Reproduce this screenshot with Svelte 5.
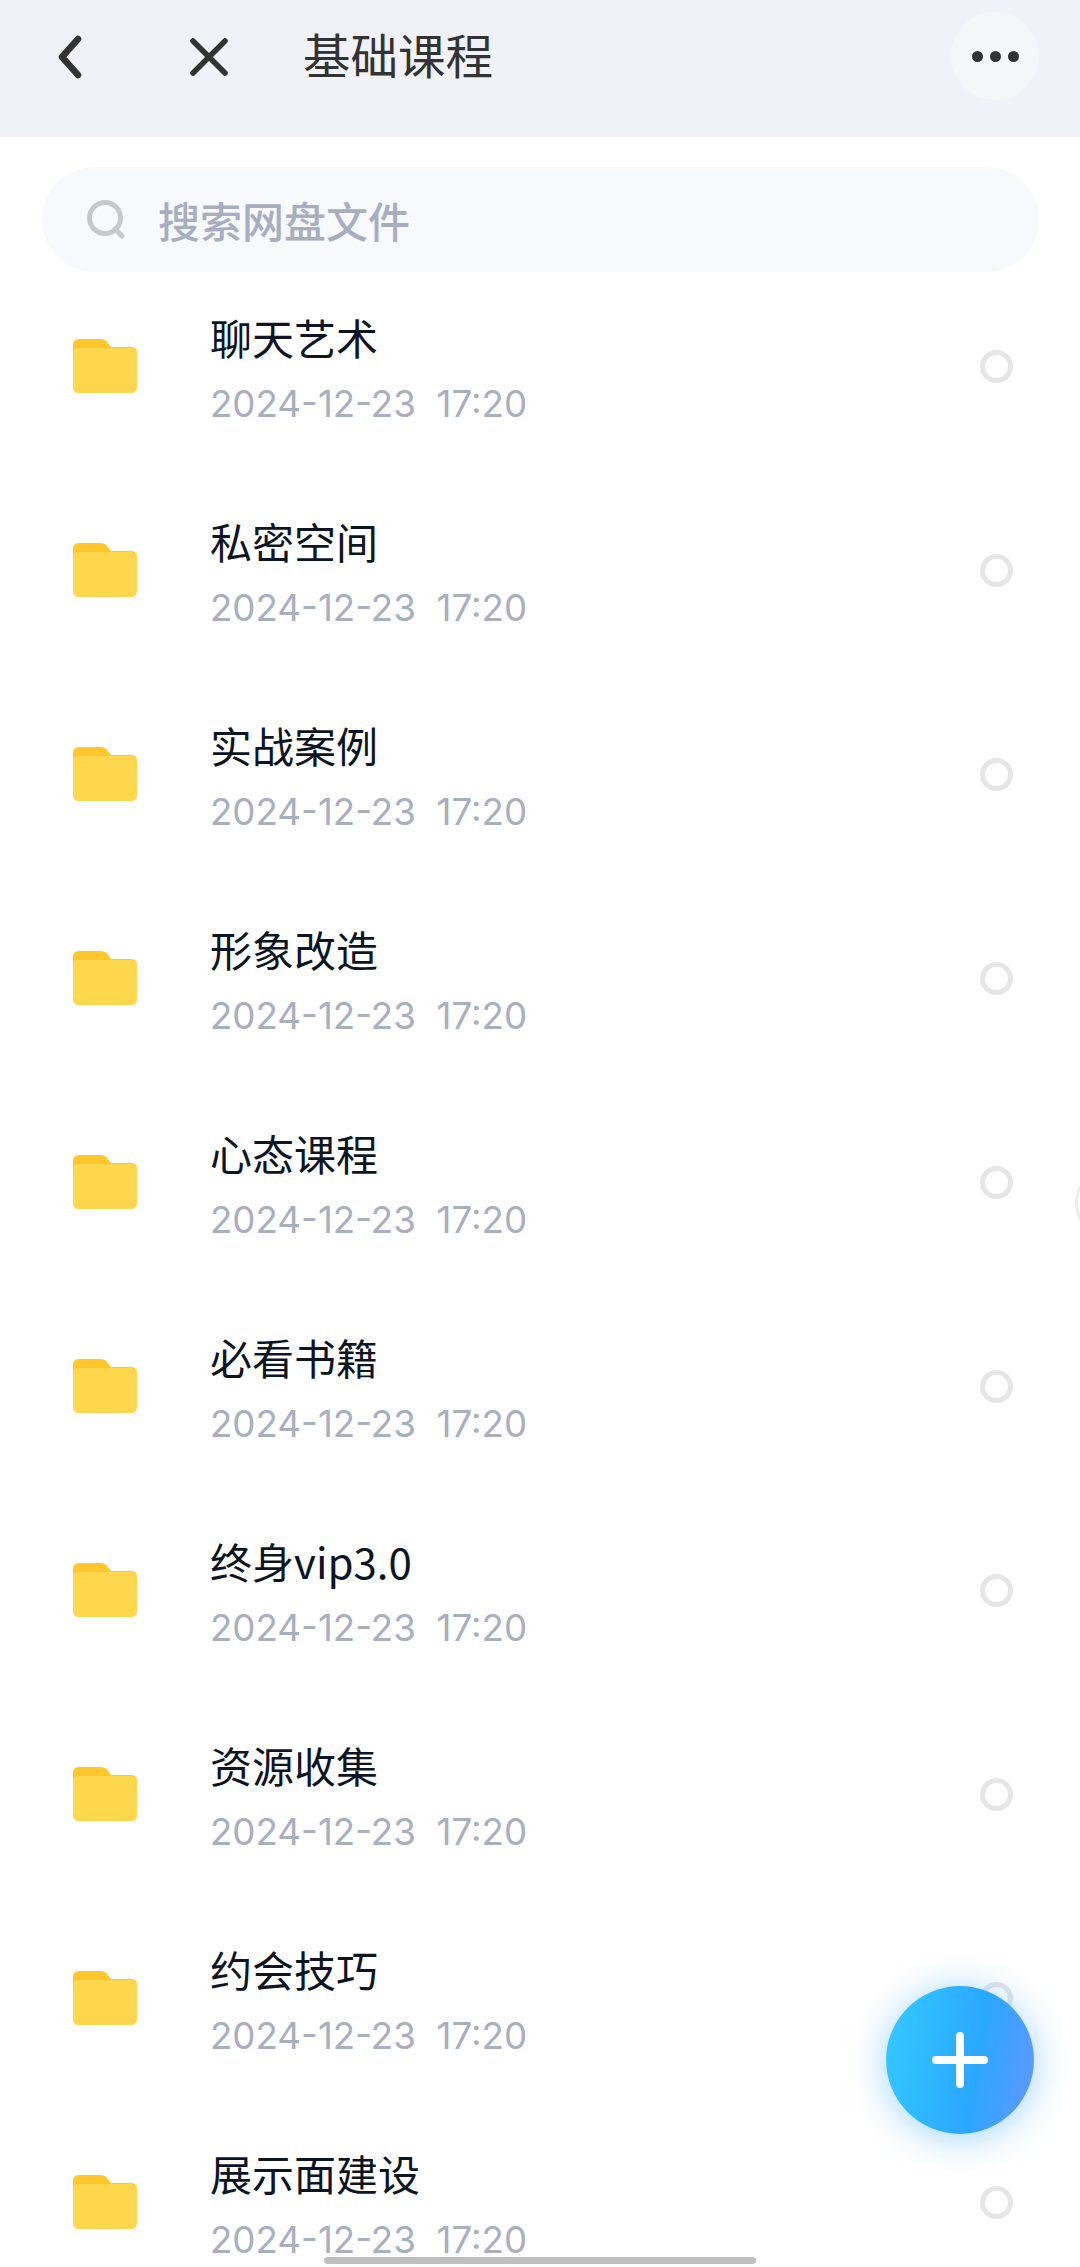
<script lang="ts">
  const folders = ['聊天艺术', '私密空间', '实战案例', '形象改造', '心态课程', '必看书籍', '终身vip3.0', '资源收集', '约会技巧', '展示面建设'];
</script>

<div class="page">
  <header class="topbar">
    <button class="icon-btn back" aria-label="back">
      <svg width="28" height="44" viewBox="0 0 28 44"><path d="M22 4 L6 22 L22 40" fill="none" stroke="#333" stroke-width="6.5" stroke-linecap="round" stroke-linejoin="round"/></svg>
    </button>
    <button class="icon-btn close" aria-label="close">
      <svg width="40" height="40" viewBox="0 0 40 40"><path d="M4 4 L36 36 M36 4 L4 36" fill="none" stroke="#333" stroke-width="5.5" stroke-linecap="round"/></svg>
    </button>
    <h1 class="title">基础课程</h1>
    <button class="more" aria-label="more"><i></i><i></i><i></i></button>
  </header>

  <div class="search-wrap">
    <div class="search">
      <svg width="40" height="40" viewBox="0 0 40 40"><circle cx="19" cy="18" r="15.5" fill="none" stroke="#c6c8cc" stroke-width="5"/><path d="M29 29 L36 36" stroke="#c6c8cc" stroke-width="5" stroke-linecap="round"/></svg>
      <span>搜索网盘文件</span>
    </div>
  </div>

  <ul class="list">
    {#each folders as name}
      <li class="row">
        <svg class="folder" width="64" height="55" viewBox="0 0 64 55">
          <path d="M0 6 Q0 0 6 0 H27 Q32 0 35 4 L38 8 H58 Q64 8 64 14 V30 H0 Z" fill="#ffc62e"/>
          <path d="M0 14 Q0 9 6 9 H58 Q64 9 64 15 V48 Q64 54 58 54 H6 Q0 54 0 48 Z" fill="#ffd74d"/>
        </svg>
        <div class="info">
          <div class="name">{name}</div>
          <div class="date">2024-12-23&nbsp;&nbsp;17:20</div>
        </div>
        <span class="radio"></span>
      </li>
    {/each}
  </ul>

  <span class="edge"></span>
  <button class="fab" aria-label="add"><svg width="56" height="56" viewBox="0 0 56 56"><path d="M28 4 V52 M4 28 H52" stroke="#fff" stroke-width="8" stroke-linecap="round"/></svg></button>
  <div class="home"></div>
</div>

<style>
  :global(body) { margin:0; background:#fff; }
  .page { position:relative; width:1080px; height:2267px; overflow:hidden; background:#fff; font-family:"Noto Sans CJK SC","Noto Sans",sans-serif; }

  .topbar { display:flex; align-items:center; height:137px; padding-bottom:23px; box-sizing:border-box; background:#f0f2f7; }
  .icon-btn { display:flex; align-items:center; justify-content:center; padding:0; border:0; background:none; }
  .back { width:28px; margin-left:56px; }
  .close { width:40px; margin-left:105px; }
  .title { margin:-6px 0 0 74px; font-size:47.5px; font-weight:400; color:#333; line-height:60px; flex:1; }
  .more { display:flex; align-items:center; justify-content:center; gap:7px; width:88px; height:88px; margin:-2px 41px 0 0; padding:0; border:0; border-radius:50%; background:#f5f6f8; }
  .more i { width:11px; height:11px; border-radius:50%; background:#333; }

  .search-wrap { height:127px; padding:30px 41px 0 42px; box-sizing:border-box; }
  .search { display:flex; align-items:center; gap:32px; height:105px; padding-left:44px; border-radius:53px; background:#f7f9fc; }
  .search span { font-size:42px; font-weight:500; color:#a8aec0; line-height:1; }

  .list { margin:0; padding:0; list-style:none; }
  .row { display:flex; align-items:center; height:204px; padding:0 67px 0 73px; }
  .folder { flex:none; }
  .info { flex:1; margin-left:73px; padding-top:6px; }
  .name { font-size:42px; line-height:54px; color:#0d1524; }
  .date { margin-top:15px; font-family:Inter,"Noto Sans",sans-serif; font-size:36.7px; line-height:50px; color:#a9aec0; }
  .radio { width:33px; height:33px; box-sizing:border-box; border:5px solid #e6e6e6; border-radius:50%; }

  .edge { position:absolute; left:1075px; top:1170px; width:60px; height:66px; box-sizing:border-box; border:3px solid #ececec; border-radius:50%; }
  .fab { position:absolute; left:886px; top:1986px; display:flex; align-items:center; justify-content:center; width:148px; height:148px; padding:0; border:0; border-radius:50%; background:linear-gradient(100deg,#35cbff 0%,#2aa7ff 60%,#6496ff 100%); box-shadow:0 4px 36px rgba(40,160,255,.45); }
  .home { position:absolute; left:324px; top:2257px; width:432px; height:7px; border-radius:4px; background:#bfbfbf; }
</style>
